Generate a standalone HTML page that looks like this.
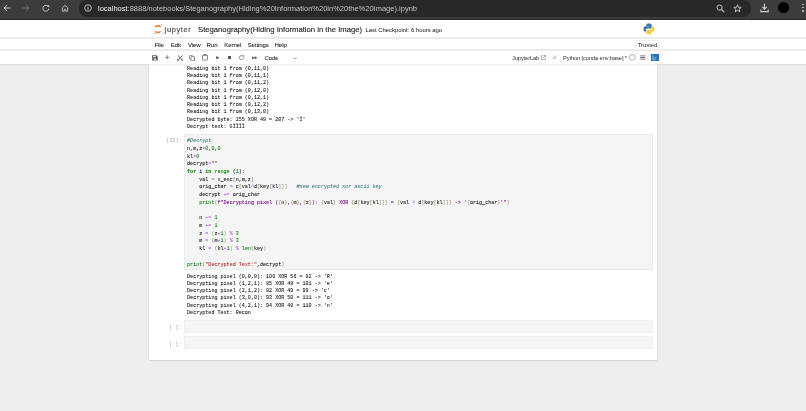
<!DOCTYPE html>
<html><head><meta charset="utf-8">
<style>
*{box-sizing:border-box;margin:0;padding:0}
html,body{width:806px;height:411px;overflow:hidden;background:#eeeeee;font-family:"Liberation Sans",sans-serif;position:relative}
.a{position:absolute;white-space:pre}
#wrap{position:absolute;left:0;top:0;width:806px;height:411px;will-change:transform;background:#eeeeee}
#chrome{position:absolute;left:0;top:0;width:806px;height:20px;background:#3c3c3c;border-bottom:1px solid #2a2a2a}
#addr{position:absolute;left:78.5px;top:-0.5px;width:672px;height:17px;background:#282828;border-radius:8px}
#hdr{position:absolute;left:0;top:20px;width:806px;height:44px;background:#fff;z-index:2}
.line{position:absolute;left:0;width:806px;height:1px;background:#e0e0e0}
.mono{-webkit-text-stroke:0.06px currentColor;font-family:"Liberation Mono",monospace;font-size:5.07px;white-space:pre;position:absolute}
.menu{font-size:6.1px;letter-spacing:-0.12px;color:#222;top:41px;-webkit-text-stroke:0.06px #222}
#nb{overflow:hidden;position:absolute;left:148.7px;top:63.5px;width:508.5px;height:296.5px;background:#fff;box-shadow:0 0.6px 1.6px rgba(0,0,0,0.22)}
.cell{position:absolute;left:35.5px;width:468.5px;background:#f5f5f5;border:0.5px solid #ebebeb}
.prompt{font-family:"Liberation Mono",monospace;font-size:5.07px;color:#a4a4a4;position:absolute;transform:scaleY(1.15);transform-origin:0 50%}
.kw{color:#008000;font-weight:bold}
.nu{color:#080}
.op{color:#b04cff}
.st{color:#ba2121}
.s2{color:#708}
.cm{color:#408080;font-style:italic}
.bi{color:#008000}
.br{color:#997}
</style></head><body><div id="wrap">
<div id="chrome">
  <div id="addr"></div>
  <!-- back arrow -->
  <svg class="a" style="left:3px;top:3.5px" width="8" height="8" viewBox="0 0 8 8"><path d="M7.5 4H1.2M4 1.2L1.2 4 4 6.8" stroke="#c8c8c8" stroke-width="1" fill="none"/></svg>
  <svg class="a" style="left:22px;top:3.5px" width="8" height="8" viewBox="0 0 8 8"><path d="M0.5 4H6.8M4 1.2L6.8 4 4 6.8" stroke="#6e6e6e" stroke-width="1" fill="none"/></svg>
  <svg class="a" style="left:41.5px;top:3.5px" width="8" height="8" viewBox="0 0 8 8"><path d="M6.6 3.2A3 3 0 1 0 6.8 4.6" stroke="#c8c8c8" stroke-width="1" fill="none"/><path d="M5 1L7.2 1 7.2 3.5Z" fill="#c8c8c8"/></svg>
  <svg class="a" style="left:60.5px;top:3.5px" width="8" height="8" viewBox="0 0 8 8"><path d="M1.4 7.2V3.7L4 1.3 6.6 3.7V7.2H4.7V5.3H3.3V7.2Z" stroke="#c8c8c8" stroke-width="0.85" fill="none" stroke-linejoin="round"/></svg>
  <svg class="a" style="left:83.5px;top:4px" width="8" height="8" viewBox="0 0 8 8"><circle cx="4" cy="4" r="3.3" stroke="#c8c8c8" stroke-width="0.9" fill="none"/><path d="M4 3.4V6M4 2V2.6" stroke="#c8c8c8" stroke-width="0.9"/></svg>
  <div class="a" style="left:98px;top:3.5px;font-size:7.5px;color:#f4f4f4;line-height:10px">localhost<span style="color:#c4c4c4">:8888/notebooks/Steganography(Hiding%20Information%20in%20the%20Image).ipynb</span></div>
  <!-- zoom -->
  <svg class="a" style="left:716px;top:3.5px" width="9" height="9" viewBox="0 0 9 9"><circle cx="3.6" cy="3.6" r="2.6" stroke="#c8c8c8" stroke-width="1" fill="none"/><path d="M5.5 5.5L8.2 8.2" stroke="#c8c8c8" stroke-width="1.1"/></svg>
  <svg class="a" style="left:733px;top:3.5px" width="9" height="9" viewBox="0 0 9 9"><path d="M4.5 0.8L5.5 3.3 8.2 3.4 6.1 5.1 6.8 7.8 4.5 6.3 2.2 7.8 2.9 5.1 0.8 3.4 3.5 3.3Z" stroke="#c8c8c8" stroke-width="0.9" fill="none" stroke-linejoin="round"/></svg>
  <svg class="a" style="left:760px;top:3px" width="9" height="10" viewBox="0 0 9 10"><path d="M4.5 0.5V6M2.2 3.8L4.5 6.1 6.8 3.8M0.8 6.5V8.6H8.2V6.5" stroke="#d0d0d0" stroke-width="1.1" fill="none"/></svg>
  <div class="a" style="left:778px;top:2px;width:11px;height:11px;border-radius:50%;background:#000"></div>
  <div class="a" style="left:802px;top:3.6px;width:1.6px;height:1.6px;border-radius:50%;background:#c8c8c8"></div>
  <div class="a" style="left:802px;top:6.8px;width:1.6px;height:1.6px;border-radius:50%;background:#c8c8c8"></div>
  <div class="a" style="left:802px;top:10px;width:1.6px;height:1.6px;border-radius:50%;background:#c8c8c8"></div>
</div>

<div id="hdr">
  <div class="line" style="top:17.4px;height:2px;background:#ececec"></div>
  <div class="line" style="top:29px;height:1.8px;background:#ececec"></div>
  <!-- jupyter logo -->
  <svg class="a" style="left:154.4px;top:3.8px" width="8" height="10" viewBox="0 0 8 10">
    <path d="M0.2 3.5Q4 -1.3 7.8 3.5Q4 2.2 0.2 3.5Z" fill="#f37726"/>
    <path d="M0.2 6.9Q4 11.7 7.8 6.9Q4 8.2 0.2 6.9Z" fill="#f37726"/>
    <circle cx="7.3" cy="0.7" r="0.55" fill="#767677"/>
    <circle cx="1.0" cy="9.3" r="0.6" fill="#616262"/>
    <circle cx="0.8" cy="1.3" r="0.35" fill="#989798"/>
  </svg>
  <div class="a" style="left:164.6px;top:4.9px;font-size:7.5px;letter-spacing:0.62px;color:#4d4d4d;line-height:10px;-webkit-text-stroke:0.15px #4d4d4d">jupyter</div>
  <div class="a" style="left:198px;top:5px;font-size:7.7px;color:#222;line-height:10px;-webkit-text-stroke:0.12px #222">Steganography(Hiding Information in the Image)</div>
  <div class="a" style="left:365.5px;top:5.6px;font-size:5.9px;color:#111;line-height:8px">Last Checkpoint: 6 hours ago</div>
  <!-- python logo -->
  <svg class="a" style="left:642.5px;top:3.2px" width="12" height="12" viewBox="0 0 12 12">
    <path d="M5.9 0.5C3.2 0.5 3.4 1.7 3.4 1.7V2.9H6V3.3H2.3C2.3 3.3 0.5 3.1 0.5 5.9 0.5 8.6 2.1 8.5 2.1 8.5H3V7.2C3 7.2 3 5.6 4.6 5.6H7.2C7.2 5.6 8.7 5.6 8.7 4.2V1.9C8.7 1.9 8.9 0.5 5.9 0.5Z" fill="#3c77a8"/>
    <path d="M6.1 11.5C8.8 11.5 8.6 10.3 8.6 10.3V9.1H6V8.7H9.7C9.7 8.7 11.5 8.9 11.5 6.1 11.5 3.4 9.9 3.5 9.9 3.5H9V4.8C9 4.8 9 6.4 7.4 6.4H4.8C4.8 6.4 3.3 6.4 3.3 7.8V10.1C3.3 10.1 3.1 11.5 6.1 11.5Z" fill="#f5cf3d"/>
  </svg>
  <div class="a" style="left:635.2px;top:19.8px;width:23.6px;height:10.2px;border:0.5px solid #f0f0f0;background:#fff"></div>
  <div class="a" style="left:637.7px;top:22.2px;font-size:6.1px;letter-spacing:-0.12px;color:#333;line-height:6px">Trusted</div>
  <div class="a menu" style="margin-top:1.6px;left:154.5px;top:19.8px">File</div>
  <div class="a menu" style="margin-top:1.6px;left:170.7px;top:19.8px">Edit</div>
  <div class="a menu" style="margin-top:1.6px;left:188px;top:19.8px">View</div>
  <div class="a menu" style="margin-top:1.6px;left:206.6px;top:19.8px">Run</div>
  <div class="a menu" style="margin-top:1.6px;left:224.3px;top:19.8px">Kernel</div>
  <div class="a menu" style="margin-top:1.6px;left:247.6px;top:19.8px">Settings</div>
  <div class="a menu" style="margin-top:1.6px;left:274.6px;top:19.8px">Help</div>
  <!-- toolbar -->
  <svg class="a" style="left:152.4px;top:34.8px" width="6" height="6" viewBox="0 0 6 6"><path d="M0.2 0.3H4.5L5.7 1.5V5.6H0.2Z" fill="#555"/><rect x="1.1" y="0.9" width="2.9" height="1.4" fill="#ddd"/><rect x="1.8" y="3.5" width="2.3" height="1.4" fill="#eee"/></svg>
  <svg class="a" style="left:165.4px;top:35.2px" width="4.5" height="4.5" viewBox="0 0 4.5 4.5"><path d="M2.25 0.2V4.3M0.2 2.25H4.3" stroke="#444" stroke-width="0.6"/></svg>
  <svg class="a" style="left:176.8px;top:34.5px" width="6.5" height="6" viewBox="0 0 6.5 6"><path d="M0.8 0.4L4.9 4.4M5.7 0.4L1.6 4.4" stroke="#555" stroke-width="0.9"/><circle cx="1.2" cy="4.9" r="0.8" stroke="#555" stroke-width="0.7" fill="none"/><circle cx="5.3" cy="4.9" r="0.8" stroke="#555" stroke-width="0.7" fill="none"/></svg>
  <svg class="a" style="left:189.2px;top:34.5px" width="6" height="6.2" viewBox="0 0 6 6.2"><path d="M0.5 4.6V0.5H3.8" stroke="#777" stroke-width="0.7" fill="none"/><rect x="1.9" y="1.7" width="3.6" height="4.1" rx="0.4" stroke="#666" stroke-width="0.8" fill="none"/></svg>
  <svg class="a" style="left:201.6px;top:34.2px" width="6" height="6.6" viewBox="0 0 6 6.6"><rect x="0.5" y="1.1" width="5" height="5" rx="0.6" stroke="#666" stroke-width="0.8" fill="none"/><rect x="1.6" y="0.3" width="2.8" height="1.3" fill="#666"/></svg>
  <svg class="a" style="left:215.5px;top:35.9px" width="3.6" height="3.6" viewBox="0 0 3.6 3.6"><path d="M0.2 0.1L3.5 1.8 0.2 3.5Z" fill="#555"/></svg>
  <div class="a" style="left:228px;top:36px;width:3.4px;height:3.4px;background:#555"></div>
  <svg class="a" style="left:239.3px;top:34.9px" width="5.2" height="5.2" viewBox="0 0 5.2 5.2"><path d="M4.3 1.7A2.05 2.05 0 1 0 4.5 3.1" stroke="#666" stroke-width="0.75" fill="none"/><path d="M3.1 0.2L4.9 0.2 4.9 2.1Z" fill="#666"/></svg>
  <svg class="a" style="left:251.8px;top:35.9px" width="5.6" height="3.6" viewBox="0 0 5.6 3.6"><path d="M0.1 0.2L2.8 1.8 0.1 3.4ZM2.8 0.2L5.5 1.8 2.8 3.4Z" fill="#555"/></svg>
  <div class="a menu" style="left:264.6px;top:35px;font-size:5.9px;color:#333">Code</div>
  <svg class="a" style="left:293.4px;top:36.8px" width="4.2" height="2.6" viewBox="0 0 4.2 2.6"><path d="M0.3 0.3L2.1 2.1 3.9 0.3" stroke="#666" stroke-width="0.6" fill="none"/></svg>
  <!-- right side of toolbar -->
  <div class="a" style="left:512px;top:34.6px;font-size:5.8px;letter-spacing:-0.15px;color:#333;line-height:7px">JupyterLab</div>
  <svg class="a" style="left:540.8px;top:35.2px" width="5" height="5" viewBox="0 0 5 5"><path d="M2.2 0.6H0.6V4.4H4.4V2.8M2.8 0.4H4.6V2.2M4.5 0.5L2.2 2.8" stroke="#616161" stroke-width="0.5" fill="none"/></svg>
  <svg class="a" style="left:551.8px;top:35px" width="5" height="5" viewBox="0 0 5 5"><circle cx="2.5" cy="2.5" r="2" fill="#cfcfcf"/><circle cx="2.5" cy="2.5" r="0.8" fill="#f4f4f4"/></svg>
  <div class="a" style="left:563px;top:34.6px;font-size:5.8px;letter-spacing:-0.15px;color:#333;line-height:7px">Python [conda env:base] *</div>
  <svg class="a" style="left:629.2px;top:34.2px" width="6.8" height="6.6" viewBox="0 0 6.8 6.6"><ellipse cx="3.4" cy="3.3" rx="2.9" ry="2.8" stroke="#666" stroke-width="0.5" fill="none"/></svg>
  <svg class="a" style="left:640.2px;top:35.2px" width="5.5" height="5" viewBox="0 0 5.5 5"><path d="M0.2 0.9H5.3M0.2 2.5H5.3M0.2 4.1H5.3" stroke="#555" stroke-width="0.8"/></svg>
  <div class="a" style="left:651.4px;top:33.8px;width:7.2px;height:7.2px;background:#2574bb"></div>
  <svg class="a" style="left:651.4px;top:33.8px" width="7.2" height="7.2" viewBox="0 0 7.2 7.2"><path d="M1.8 1.4V5.8H5.4" stroke="#fff" stroke-width="0.5" fill="none"/><path d="M2.6 4.6L3.6 3.4 4.4 4 5.2 2.6" stroke="#fff" stroke-width="0.45" fill="none"/></svg>
</div>


<div id="nb">
  <div id="out1" class="mono" style="left:38.4px;top:2.3px;line-height:7.28px;color:#111"><span style="position:absolute;top:-7.28px">Reading bit 1 from (0,10,2)</span>Reading bit 1 from (0,11,0)
Reading bit 1 from (0,11,1)
Reading bit 1 from (0,11,2)
Reading bit 1 from (0,12,0)
Reading bit 1 from (0,12,1)
Reading bit 1 from (0,12,2)
Reading bit 1 from (0,13,0)
Decrypted byte: 255 XOR 48 = 207 -&gt; 'Ï'
Decrypt text: GÏÏÏÏ</div>
  <div class="prompt" style="left:17.6px;top:74.9px;line-height:7.69px">[32]:</div>
  <div class="cell" style="top:70.5px;height:136.3px"></div>
  <div class="mono" style="left:38.4px;top:74.6px;line-height:7.72px;color:#111"><span class="cm">#Decrypt</span>
n,m,z<span class="op">=</span><span class="nu">0</span>,<span class="nu">0</span>,<span class="nu">0</span>
kl<span class="op">=</span><span class="nu">0</span>
decrypt<span class="op">=</span><span class="st">""</span>
<span class="kw">for</span> i <span class="kw">in</span> <span class="bi">range</span> (<span class="nu">1</span>):
    val <span class="op">=</span> x_enc<span class="br">[</span>n,m,z<span class="br">]</span>
    orig_char <span class="op">=</span> c<span class="br">[</span>val<span class="op">^</span>d<span class="br">[</span>key<span class="br">[</span>kl<span class="br">]]]</span>   <span class="cm">#new encrypted xor ascii key</span>
    decrypt <span class="op">+=</span> orig_char
    <span class="bi">print</span><span class="br">(</span><span class="s2">f"Decrypting pixel (</span><span class="br">{</span>n<span class="br">}</span><span class="s2">,</span><span class="br">{</span>m<span class="br">}</span><span class="s2">,</span><span class="br">{</span>z<span class="br">}</span><span class="s2">): </span><span class="br">{</span>val<span class="br">}</span><span class="s2"> XOR </span><span class="br">{</span>d<span class="br">[</span>key<span class="br">[</span>kl<span class="br">]]}</span><span class="s2"> = </span><span class="br">{</span>val <span class="op">^</span> d<span class="br">[</span>key<span class="br">[</span>kl<span class="br">]]}</span><span class="s2"> -&gt; '</span><span class="br">{</span>orig_char<span class="br">}</span><span class="s2">'"</span><span class="br">)</span>

    n <span class="op">+=</span> <span class="nu">1</span>
    m <span class="op">+=</span> <span class="nu">1</span>
    z <span class="op">=</span> <span class="br">(</span>z<span class="op">+</span><span class="nu">1</span><span class="br">)</span> <span class="op">%</span> <span class="nu">3</span>
    m <span class="op">=</span> <span class="br">(</span>m<span class="op">+</span><span class="nu">1</span><span class="br">)</span> <span class="op">%</span> <span class="nu">3</span>
    kl <span class="op">=</span> <span class="br">(</span>kl<span class="op">+</span><span class="nu">1</span><span class="br">)</span> <span class="op">%</span> <span class="bi">len</span><span class="br">(</span>key<span class="br">)</span>

<span class="bi">print</span><span class="br">(</span><span class="st">"Decrypted Text:"</span>,decrypt<span class="br">)</span></div>
  <div class="mono" style="left:38.4px;top:210px;line-height:7.27px;color:#111">Decrypting pixel (0,0,0): 106 XOR 56 = 82 -&gt; 'R'
Decrypting pixel (1,2,1): 85 XOR 48 = 101 -&gt; 'e'
Decrypting pixel (2,1,2): 82 XOR 49 = 99 -&gt; 'c'
Decrypting pixel (3,0,0): 93 XOR 50 = 111 -&gt; 'o'
Decrypting pixel (4,2,1): 94 XOR 48 = 110 -&gt; 'n'
Decrypted Text: Recon</div>
  <div class="prompt" style="left:20.6px;top:261.6px;line-height:7.69px">[ ]:</div>
  <div class="cell" style="top:256.4px;height:12.7px;border-color:#f0f0f0"></div>
  <div class="prompt" style="left:20.6px;top:278px;line-height:7.69px">[ ]:</div>
  <div class="cell" style="top:272.8px;height:12.8px;border-color:#f0f0f0"></div>
</div>
<div class="a" style="left:0;top:20px;width:806px;height:43.5px;background:#fff;z-index:-1"></div>
<div class="a" style="left:0;top:64px;width:806px;height:1.6px;z-index:3;background:linear-gradient(rgba(0,0,0,0.08),rgba(0,0,0,0))"></div>
</div></body></html>
